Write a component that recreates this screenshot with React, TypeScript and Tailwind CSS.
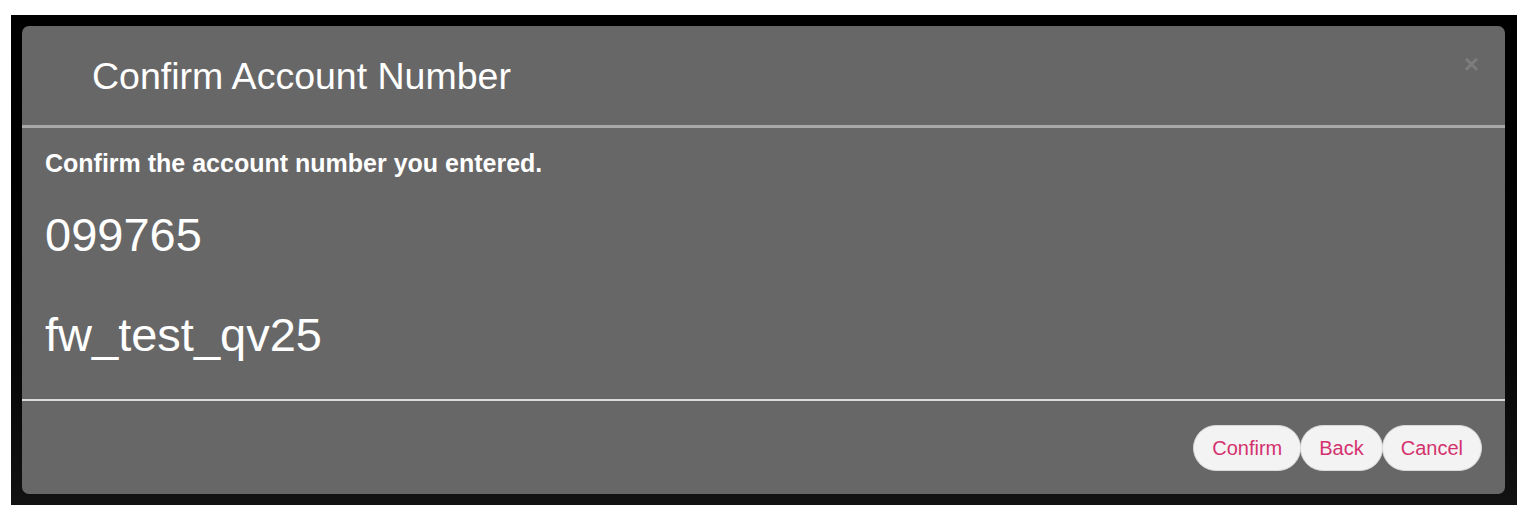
import React from 'react';

export default function App() {
  const account = { number: '099765', name: 'fw_test_qv25' };
  const buttons = ['Confirm', 'Back', 'Cancel'];

  return (
    <div className="w-[1529px] h-[522px] bg-white pl-[11px] pt-[15px] font-['Liberation_Sans',Arial,sans-serif]">
      {/* Backdrop */}
      <div className="w-[1506px] h-[490px] bg-gradient-to-b from-black to-[#121212] p-[11px]">
        {/* Dialog */}
        <div className="w-[1483px] h-[468px] bg-[#676767] rounded-[7px] flex flex-col text-white">
          <div className="h-[102px] shrink-0 flex items-center justify-between pl-[70px] pr-[26px] border-b-[3px] border-[#a8a8a8]">
            <h1 className="text-[37.5px] leading-[44px] font-normal">Confirm Account Number</h1>
            <span className="text-[26px] leading-none font-bold text-[#7d7d7d] mt-[-24px]">×</span>
          </div>

          <div className="flex-1 pl-[23px] pt-[20px]">
            <p className="text-[25px] leading-[30px] font-bold">Confirm the account number you entered.</p>
            <p className="text-[47px] leading-[54px] mt-[30px]">{account.number}</p>
            <p className="text-[47px] leading-[54px] mt-[46px]">{account.name}</p>
          </div>

          <div className="h-[95px] shrink-0 border-t-2 border-[#dcdcdc] flex items-center justify-end pr-[23px]">
            {buttons.map((label) => (
              <button
                key={label}
                className="h-[46px] px-[18px] rounded-full bg-[#f3f3f3] border border-[#d9d9d9] text-[20px] text-[#d4326f] -ml-px"
              >
                {label}
              </button>
            ))}
          </div>
        </div>
      </div>
    </div>
  );
}
